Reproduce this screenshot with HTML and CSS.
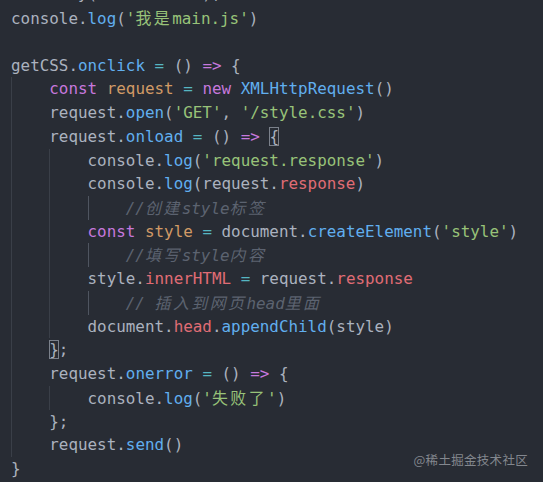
FILE: index.html
```html
<!DOCTYPE html>
<html lang="zh">
<head>
<meta charset="utf-8">
<title>main.js</title>
<link rel="stylesheet" href="styles.css">
</head>
<body>
<div class="editor">
  <div class="code">
    <div class="ln">loaded y('nodestate'), b</div>
    <div class="ln">console.<span class="fn">log</span>(<span class="str">'<span class="cj">我是</span>main.js'</span>)</div>
    <div class="ln"> </div>
    <div class="ln">getCSS.<span class="fn">onclick</span> <span class="op">=</span> () <span class="kw">=&gt;</span> {</div>
    <div class="ln"><span class="i"></span><span class="kw">const</span> <span class="var">request</span> <span class="op">=</span> <span class="kw">new</span> <span class="fn">XMLHttpRequest</span>()</div>
    <div class="ln"><span class="i"></span>request.<span class="fn">open</span>(<span class="str">'GET'</span>, <span class="str">'/style.css'</span>)</div>
    <div class="ln"><span class="i"></span>request.<span class="fn">onload</span> <span class="op">=</span> () <span class="kw">=&gt;</span> <span class="bx">{</span></div>
    <div class="ln"><span class="i"></span><span class="i"></span>console.<span class="fn">log</span>(<span class="str">'request.response'</span>)</div>
    <div class="ln"><span class="i"></span><span class="i"></span>console.<span class="fn">log</span>(request.<span class="prop">response</span>)</div>
    <div class="ln"><span class="i"></span><span class="i"></span><span class="i hi"></span><span class="cm">//<span class="cj">创建</span>style<span class="cj">标签</span></span></div>
    <div class="ln"><span class="i"></span><span class="i"></span><span class="kw">const</span> <span class="var">style</span> <span class="op">=</span> document.<span class="fn">createElement</span>(<span class="str">'style'</span>)</div>
    <div class="ln"><span class="i"></span><span class="i"></span><span class="i hi"></span><span class="cm">//<span class="cj">填写</span>style<span class="cj">内容</span></span></div>
    <div class="ln"><span class="i"></span><span class="i"></span>style.<span class="prop">innerHTML</span> <span class="op">=</span> request.<span class="prop">response</span></div>
    <div class="ln"><span class="i"></span><span class="i"></span><span class="i hi"></span><span class="cm">// <span class="cj">插入到网页</span>head<span class="cj">里面</span></span></div>
    <div class="ln"><span class="i"></span><span class="i"></span>document.<span class="prop">head</span>.<span class="fn">appendChild</span>(style)</div>
    <div class="ln"><span class="i"></span><span class="bx">}</span>;</div>
    <div class="ln"><span class="i"></span>request.<span class="fn">onerror</span> <span class="op">=</span> () <span class="kw">=&gt;</span> {</div>
    <div class="ln"><span class="i"></span><span class="i"></span>console.<span class="fn">log</span>(<span class="str">'<span class="cj">失败了</span>'</span>)</div>
    <div class="ln"><span class="i"></span>};</div>
    <div class="ln"><span class="i"></span>request.<span class="fn">send</span>()</div>
    <div class="ln">}</div>
  </div>
  <div class="mark">@稀土掘金技术社区</div>
</div>
</body>
</html>
```

FILE: styles.css
```css
html, body {
  margin: 0;
  padding: 0;
  background: #282c34;
}
.editor {
  position: relative;
  width: 543px;
  height: 482px;
  overflow: hidden;
  background: #282c34;
}
.code {
  margin-top: -17.6px;
  padding-left: 11px;
  font-family: "DejaVu Sans Mono", "Noto Sans CJK SC", monospace;
  font-size: 15.9px;
  line-height: 23.74px;
  color: #abb2bf;
}
.ln {
  height: 23.74px;
  white-space: pre;
}
.i {
  display: inline-block;
  width: 4ch;
  height: 23.74px;
  vertical-align: top;
  box-shadow: inset 1px 0 #3a3f48;
}
.i.hi {
  box-shadow: inset 1px 0 #4f5560;
}
.cj {
  font-family: "Noto Sans CJK SC", sans-serif;
  letter-spacing: 2.5px;
}
.kw { color: #c678dd; }
.var { color: #d19a66; }
.op { color: #56b6c2; }
.fn { color: #61afef; }
.str { color: #98c379; }
.prop { color: #e06c75; }
.cm {
  color: #5c6370;
  font-style: italic;
}
.bx {
  outline: 1px solid #7b818b;
  outline-offset: -1px;
}
.mark {
  position: absolute;
  right: 15px;
  bottom: 13px;
  font-family: "Noto Sans CJK SC", sans-serif;
  font-size: 12.5px;
  color: #83878e;
  letter-spacing: 0.3px;
}
```
